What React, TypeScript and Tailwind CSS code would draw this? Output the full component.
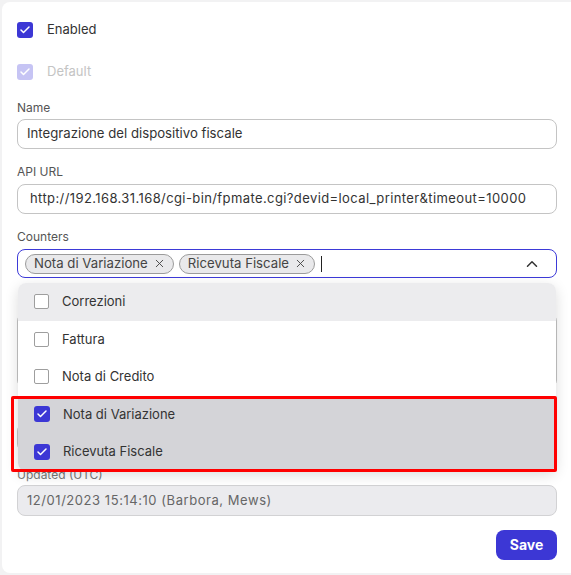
import { Check, ChevronUp, X } from "lucide-react";

const counters = [
  { name: "Correzioni", checked: false, hover: true },
  { name: "Fattura", checked: false },
  { name: "Nota di Credito", checked: false },
  { name: "Nota di Variazione", checked: true },
  { name: "Ricevuta Fiscale", checked: true },
];

function Box({ checked, faded }: { checked: boolean; faded?: boolean }) {
  if (checked) {
    return (
      <span
        className={`flex w-4 h-4 shrink-0 items-center justify-center rounded-[3px] ${
          faded ? "bg-[#c6c4f4]" : "bg-[#3c37d5]"
        }`}
      >
        <Check size={12} strokeWidth={3} className="text-white" />
      </span>
    );
  }
  return <span className="block w-[15px] h-[15px] shrink-0 rounded-[2px] border border-[#9e9e9e] bg-white" />;
}

function Label({ children }: { children?: React.ReactNode }) {
  return <div className="h-4 text-xs leading-4 text-[#555]">{children}</div>;
}

function Chip({ text }: { text: string }) {
  return (
    <span className="flex h-5 items-center gap-[5px] rounded-full border border-[#9b9b9b] bg-[#e9e9eb] pl-2 pr-[7px] text-[13.2px] text-[#444]">
      {text}
      <X size={13} strokeWidth={1.7} />
    </span>
  );
}

export default function App() {
  return (
    <div
      className="h-[575px] overflow-hidden bg-[#f2f2f3] pt-[2px] pl-[2px]"
      style={{ fontFamily: "Inter, 'Noto Sans', sans-serif" }}
    >
      <div className="h-[571px] rounded-l-lg bg-white pl-[15px] pr-[14px] pt-5">
        <div className="flex h-4 items-center gap-[14px]">
          <Box checked />
          <span className="text-[13px] text-[#333]">Enabled</span>
        </div>
        <div className="mt-[26px] flex h-4 items-center gap-[14px]">
          <Box checked faded />
          <span className="text-[13px] text-[#c4c4c4]">Default</span>
        </div>

        <div className="mt-5">
          <Label>Name</Label>
          <div className="mt-[3px] h-[30px] flex items-center rounded-lg border border-[#c4c4c4] px-[9px] text-[13.2px] text-[#333]">
            Integrazione del dispositivo fiscale
          </div>
        </div>

        <div className="mt-[15px]">
          <Label>API URL</Label>
          <div className="mt-1 h-[30px] flex items-center rounded-lg border border-[#c4c4c4] px-3 text-[13px] tracking-[0.4px] text-[#333]">
            http://192.168.31.168/cgi-bin/fpmate.cgi?devid=local_printer&amp;timeout=10000
          </div>
        </div>

        <div className="relative mt-[15px]">
          <Label>Counters</Label>
          <div className="mt-1 h-[29px] flex items-center gap-[5px] rounded-lg border-[1.5px] border-[#3d3ad8] pl-[7px] pr-[15px]">
            <Chip text="Nota di Variazione" />
            <Chip text="Ricevuta Fiscale" />
            <span className="ml-[1px] h-4 w-px bg-[#222]" />
            <ChevronUp size={18} strokeWidth={2} className="ml-auto text-[#333]" />
          </div>

          {/* open counters menu */}
          <div className="absolute left-px right-px top-[54px] z-10 overflow-hidden rounded-lg bg-white shadow-[0_4px_14px_rgba(0,0,0,0.14)]">
            {counters.map((c) => (
              <div
                key={c.name}
                className={`flex h-[37.5px] items-center gap-[13px] pl-4 text-[13px] text-[#333] ${
                  c.checked ? "bg-[#d4d4d8]" : c.hover ? "bg-[#ececee]" : "bg-white"
                }`}
              >
                <Box checked={c.checked} />
                {c.name}
              </div>
            ))}
          </div>
          <div className="absolute left-[-6px] right-0 top-[167px] z-20 h-[76px] rounded-[2px] border-[3px] border-[#ff0000]" />
        </div>

        {/* fields under the open menu */}
        <div className="mt-[15px]">
          <Label />
          <div className="mt-1 h-[75px] rounded-lg border border-[#c4c4c4]" />
        </div>
        <div className="mt-[15px]">
          <Label />
          <div className="mt-1 h-[29px] rounded-lg border border-[#c4c4c4]" />
        </div>

        <div className="mt-[15px]">
          <div className="h-4 text-xs leading-4 text-[#777]">Updated (UTC)</div>
          <div className="mt-[2px] h-[31px] flex items-center rounded-lg border border-[#d2d2d4] bg-[#ebebee] px-[9px] text-[13px] tracking-[0.55px] text-[#666]">
            12/01/2023 15:14:10 (Barbora, Mews)
          </div>
        </div>

        <div className="mt-[14px] flex justify-end">
          <button className="h-[30px] w-[61px] rounded-lg bg-[#3c37d5] text-sm font-bold text-white">Save</button>
        </div>
      </div>
    </div>
  );
}
